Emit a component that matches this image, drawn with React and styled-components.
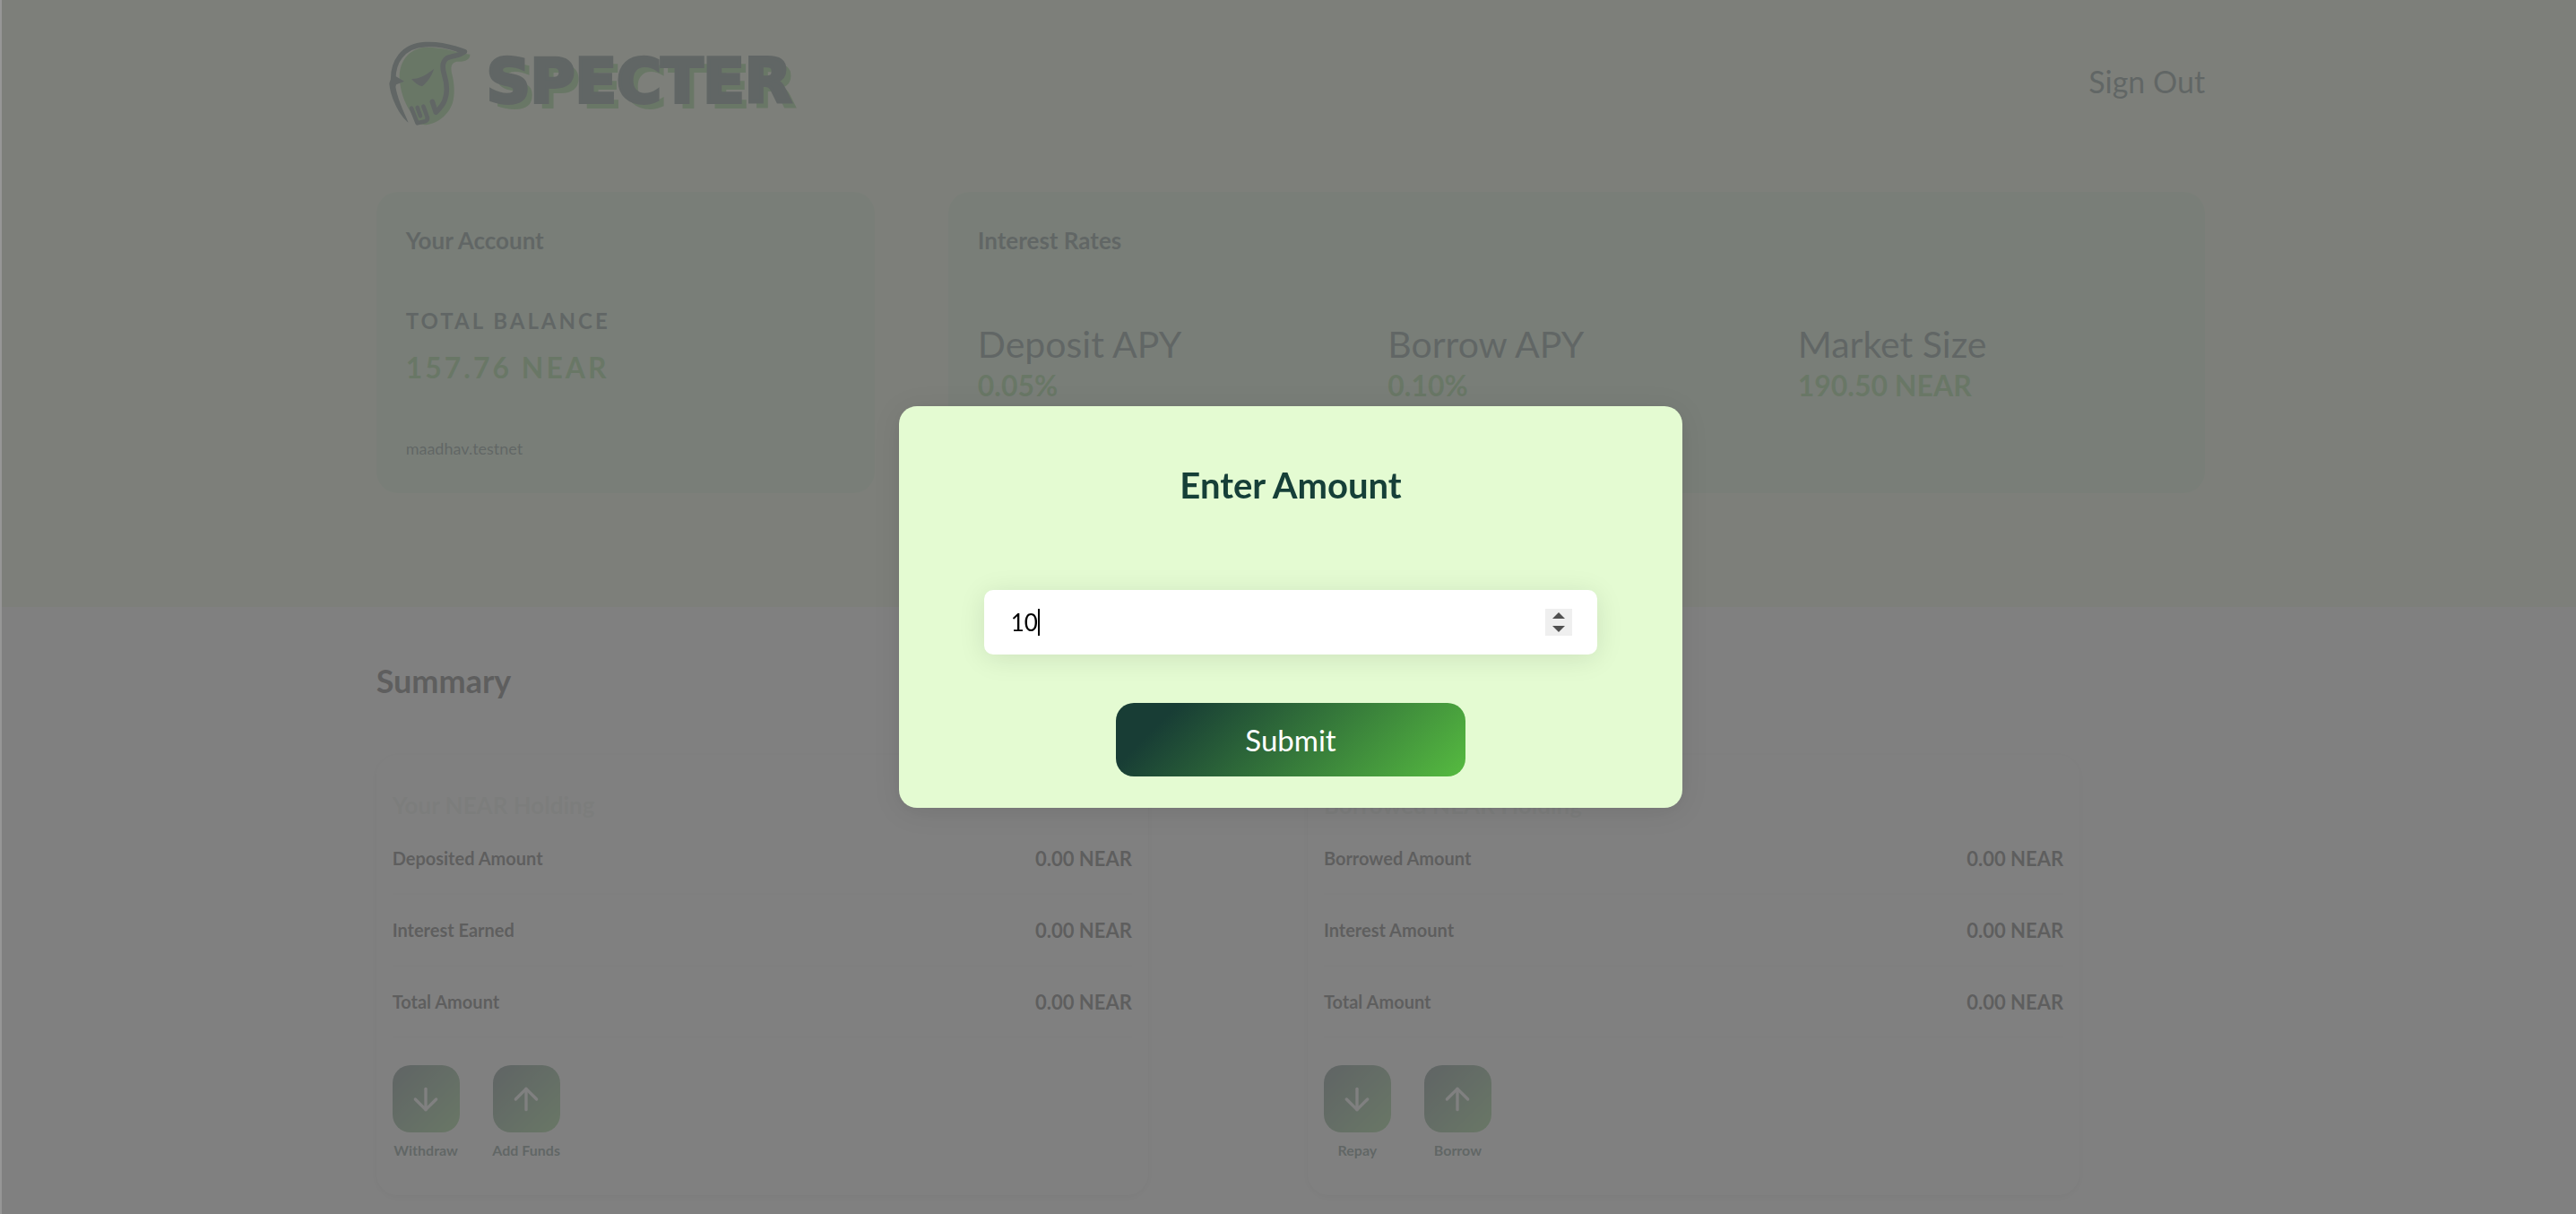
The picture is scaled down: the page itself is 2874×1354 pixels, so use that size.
import React, {useState} from 'react'
import styled, {createGlobalStyle} from 'styled-components'
import {ArrowDown, ArrowUp} from 'lucide-react'

const rates = [
    {name: 'Deposit APY', value: '0.05%'},
    {name: 'Borrow APY', value: '0.10%'},
    {name: 'Market Size', value: '190.50 NEAR'},
]

const holdings = [
    {
        title: 'Your NEAR Holding',
        rows: [
            ['Deposited Amount', '0.00 NEAR'],
            ['Interest Earned', '0.00 NEAR'],
            ['Total Amount', '0.00 NEAR'],
        ],
        actions: [
            {label: 'Withdraw', Icon: ArrowDown},
            {label: 'Add Funds', Icon: ArrowUp},
        ],
    },
    {
        title: 'Borrowed NEAR Holding',
        rows: [
            ['Borrowed Amount', '0.00 NEAR'],
            ['Interest Amount', '0.00 NEAR'],
            ['Total Amount', '0.00 NEAR'],
        ],
        actions: [
            {label: 'Repay', Icon: ArrowDown},
            {label: 'Borrow', Icon: ArrowUp},
        ],
    },
]

function Logo() {
    return (
        <Brand href="#">
            <svg width="110" height="110" viewBox="0 0 330 330" aria-hidden="true">
                <path
                    fill="#56bb40"
                    d="M62 150C62 92 98 52 152 50C192 50 232 58 262 68L298 74C300 90 282 100 254 98C236 102 232 116 238 140C246 168 248 210 240 236C226 278 186 308 146 310L122 306L96 262C78 232 64 196 62 150Z"
                />
                <g fill="none" stroke="#163f38" strokeLinecap="round" strokeLinejoin="round">
                    <path
                        strokeWidth="17"
                        d="M42 176C34 98 76 44 148 41C196 38 240 50 280 65C262 80 240 78 222 86C206 96 204 116 212 142C222 174 222 204 214 226C208 244 196 256 184 268L172 232"
                    />
                    <path strokeWidth="14" d="M102 254L122 304L148 298C156 294 158 288 154 280L142 248M122 252L132 280" />
                </g>
                <path fill="#163f38" d="M32 160L44 144L78 164L48 176C54 218 72 256 92 302C62 280 30 214 28 170Z" />
                <path fill="#163f38" d="M102 156C132 156 154 140 178 122C168 150 154 168 138 181C124 178 112 168 102 156Z" />
            </svg>
            <Wordmark>SPECTER</Wordmark>
        </Brand>
    )
}

function Holding({title, rows, actions}) {
    return (
        <HoldingCard>
            <HoldingTitle>{title}</HoldingTitle>
            {rows.map(([name, amount]) => (
                <Row key={name}>
                    <span>{name}</span>
                    <Amount>{amount}</Amount>
                </Row>
            ))}
            <Actions>
                {actions.map(({label, Icon}) => (
                    <Action key={label}>
                        <ActionButton type="button" aria-label={label}>
                            <Icon size={40} strokeWidth={2} />
                        </ActionButton>
                        <ActionLabel>{label}</ActionLabel>
                    </Action>
                ))}
            </Actions>
        </HoldingCard>
    )
}

function AmountModal() {
    const [amount, setAmount] = useState('10')

    function step(by){
        setAmount(String(Number(amount) + by))
    }

    return (
        <Overlay>
            <Modal role="dialog" aria-labelledby="amount-title" onSubmit={(e) => e.preventDefault()}>
                <ModalTitle id="amount-title">
                    <label htmlFor="amount">Enter Amount</label>
                </ModalTitle>
                <Field>
                    <Typed>
                        <AmountInput id="amount" type="number" value={amount} onChange={(e) => setAmount(e.target.value)} />
                        <Caret />
                    </Typed>
                    <Stepper>
                        <StepButton type="button" aria-label="Increase" onClick={() => step(1)}>
                            <svg width="14" height="7" viewBox="0 0 14 7"><path d="M0 7L7 0L14 7Z" fill="#505050" /></svg>
                        </StepButton>
                        <StepButton type="button" aria-label="Decrease" onClick={() => step(-1)}>
                            <svg width="14" height="7" viewBox="0 0 14 7"><path d="M0 0L7 7L14 0Z" fill="#505050" /></svg>
                        </StepButton>
                    </Stepper>
                </Field>
                <Submit type="submit">Submit</Submit>
            </Modal>
        </Overlay>
    )
}

function App() {
    return (
        <>
            <GlobalStyle />
            <Page>
                <Hero>
                    <Container>
                        <Nav>
                            <Logo />
                            <SignOut type="button">Sign Out</SignOut>
                        </Nav>
                        <Cards>
                            <Card>
                                <CardTitle>Your Account</CardTitle>
                                <BalanceLabel>TOTAL BALANCE</BalanceLabel>
                                <Balance>157.76 NEAR</Balance>
                                <AccountId>maadhav.testnet</AccountId>
                            </Card>
                            <Card>
                                <CardTitle>Interest Rates</CardTitle>
                                <Rates>
                                    {rates.map(r => (
                                        <div key={r.name}>
                                            <RateName>{r.name}</RateName>
                                            <RateValue>{r.value}</RateValue>
                                        </div>
                                    ))}
                                </Rates>
                            </Card>
                        </Cards>
                    </Container>
                </Hero>
                <Container>
                    <Summary>Summary</Summary>
                    <Holdings>
                        {holdings.map(h => <Holding key={h.title} {...h} />)}
                    </Holdings>
                </Container>
            </Page>
            <AmountModal />
        </>
    )
}

export default App;

const GlobalStyle = createGlobalStyle`
    * {
        box-sizing: border-box;
    }
    body {
        margin: 0;
        background: #ffffff;
        color: #000000;
        font-family: Lato, "Liberation Sans", sans-serif;
    }
    h1, h2, h3, p {
        margin: 0;
    }
    button, input {
        font-family: inherit;
        border: none;
        padding: 0;
    }
    button {
        cursor: pointer;
    }
`

const Page = styled.div`
    height: 100vh;
    overflow: hidden;
`

const Container = styled.div`
    width: 71%;
    margin: 0 14.4% 0 auto;
`

const Hero = styled.header`
    background: #e8f6cf;
    padding-bottom: 127px;
`

const Nav = styled.nav`
    display: flex;
    justify-content: space-between;
    align-items: center;
    padding: 36px 0 68px;
`

const Brand = styled.a`
    display: flex;
    align-items: center;
    gap: 8px;
    padding-left: 5px;
    text-decoration: none;
`

const Wordmark = styled.span`
    color: #163f38;
    font-family: "DejaVu Sans", sans-serif;
    font-size: 68px;
    line-height: 80px;
    font-weight: 700;
    -webkit-text-stroke: 4px #163f38;
    text-shadow: 7px 7px 0 #56bb40;
`

const SignOut = styled.button`
    background: none;
    color: #163f38;
    font-size: 34px;
    line-height: 40px;
`

const Cards = styled.div`
    display: grid;
    grid-template-columns: 556fr 1402fr;
    gap: 82px;
`

const Card = styled.section`
    height: 336px;
    padding: 38px 33px;
    border-radius: 24px;
    background: #c9f0c0;
    color: #163f38;
`

const CardTitle = styled.h3`
    font-size: 26px;
    line-height: 32px;
    font-weight: 700;
`

const BalanceLabel = styled.p`
    margin-top: 58px;
    font-size: 24px;
    line-height: 32px;
    font-weight: 700;
    letter-spacing: 3px;
`

const Balance = styled.p`
    margin-top: 16px;
    color: #56bb40;
    font-size: 32px;
    line-height: 40px;
    font-weight: 700;
    letter-spacing: 3px;
`

const AccountId = styled.p`
    margin-top: 58px;
    font-size: 18px;
    line-height: 24px;
`

const Rates = styled.div`
    display: grid;
    grid-template-columns: repeat(3, 1fr);
    gap: 36px;
    margin-top: 76px;
`

const RateName = styled.p`
    font-size: 41px;
    line-height: 48px;
`

const RateValue = styled.p`
    margin-top: 2px;
    color: #56bb40;
    font-size: 32px;
    line-height: 40px;
    font-weight: 700;
`

const Summary = styled.h2`
    margin-top: 60px;
    font-size: 36px;
    line-height: 44px;
    font-weight: 700;
`

const Holdings = styled.div`
    display: flex;
    gap: 178px;
    margin-top: 61px;
    padding-right: 140px;
`

const HoldingCard = styled.section`
    flex: 1;
    padding: 40px 18px;
    border-radius: 24px;
    box-shadow: 0 2px 10px rgba(0, 0, 0, 0.14);
`

const HoldingTitle = styled.h3`
    padding-bottom: 4px;
    color: #e0e6e0;
    font-size: 26px;
    line-height: 32px;
    font-weight: 700;
`

const Row = styled.div`
    display: flex;
    justify-content: space-between;
    align-items: center;
    height: 80px;
    border-bottom: 2px solid #f4f4f4;
    font-size: 20px;
    font-weight: 700;
`

const Amount = styled.span`
    font-size: 22px;
`

const Actions = styled.div`
    display: flex;
    gap: 37px;
    margin-top: 30px;
`

const Action = styled.div`
    width: 75px;
    display: flex;
    flex-direction: column;
    align-items: center;
`

const ActionButton = styled.button`
    width: 75px;
    height: 75px;
    display: grid;
    place-items: center;
    border-radius: 20px;
    background: linear-gradient(135deg, #163f38 10%, #56bb40 100%);
    color: #ffffff;
`

const ActionLabel = styled.span`
    margin-top: 10px;
    color: #163f38;
    font-size: 16px;
    line-height: 20px;
    font-weight: 700;
    white-space: nowrap;
`

const Overlay = styled.div`
    position: fixed;
    inset: 0;
    display: grid;
    place-items: center;
    padding-left: 4px;
    border-left: 2px solid #969696;
    background: rgba(108, 108, 108, 0.867);
    background-clip: padding-box;
`

const Modal = styled.form`
    width: 30.5%;
    min-width: 560px;
    display: flex;
    flex-direction: column;
    align-items: center;
    padding: 65px 95px 35px;
    border-radius: 20px;
    background: #e4fbd2;
    box-shadow: 0 4px 30px rgba(0, 0, 0, 0.1);
`

const ModalTitle = styled.h1`
    color: #163f38;
    font-size: 40px;
    line-height: 46px;
    font-weight: 700;
`

const Field = styled.div`
    width: 100%;
    height: 72px;
    margin-top: 94px;
    display: flex;
    align-items: center;
    justify-content: space-between;
    padding: 0 28px 0 30px;
    border-radius: 10px;
    background: #ffffff;
    box-shadow: 0 4px 30px rgba(0, 0, 0, 0.1);
`

const Typed = styled.div`
    position: relative;
    flex: 1;
`

const AmountInput = styled.input`
    width: 100%;
    background: none;
    outline: none;
    color: #000000;
    font-size: 26px;
    line-height: 32px;
    appearance: textfield;
    &::-webkit-inner-spin-button {
        display: none;
    }
`

const Caret = styled.span`
    position: absolute;
    left: 30px;
    top: 1px;
    width: 2px;
    height: 30px;
    background: #000000;
`

const Stepper = styled.div`
    width: 30px;
    display: grid;
    background: #efefef;
`

const StepButton = styled.button`
    height: 15px;
    display: grid;
    place-items: center;
    background: none;
`

const Submit = styled.button`
    width: 57%;
    height: 82px;
    margin-top: 54px;
    border-radius: 20px;
    background: linear-gradient(135deg, #183d35 15%, #56bb40 100%);
    color: #ffffff;
    font-size: 33px;
`
